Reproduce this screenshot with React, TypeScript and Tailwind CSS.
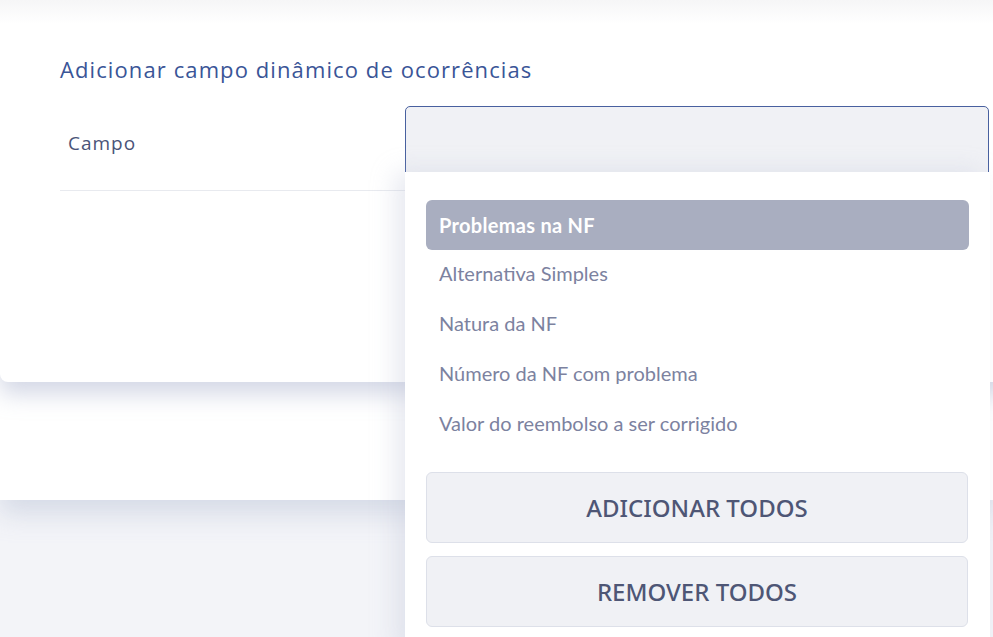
import React from "react";

const options = [
  "Problemas na NF",
  "Alternativa Simples",
  "Natura da NF",
  "Número da NF com problema",
  "Valor do reembolso a ser corrigido",
];

const App = () => {
  return (
    <div className="relative w-[993px] h-[637px] overflow-hidden bg-[#f3f4f8]">
      {/* page card behind the modal */}
      <div className="h-[500px] bg-white shadow-[0_14px_24px_rgba(180,188,210,0.45)]">
        {/* modal */}
        <div className="relative h-[382px] w-[1010px] bg-white rounded-bl-lg shadow-[0_12px_22px_rgba(170,178,205,0.5)]">
          <div className="h-[24px] bg-gradient-to-b from-[#f6f6f7] to-white" />
          <div className="pl-[60px] pt-[30px]">
            <h2 className="text-[22px] leading-[30px] text-[#3a5597] font-['Open_Sans',sans-serif] tracking-[1.1px]">
              Adicionar campo dinâmico de ocorrências
            </h2>
            <div className="flex mt-[22px] w-[930px] border-b border-[#e8eaef]">
              <div className="w-[345px] h-[84px] pl-[8px] pt-[24px] text-[19px] leading-[26px] tracking-[1px] text-[#4a5478] font-['Open_Sans',sans-serif]">
                Campo
              </div>
              <div className="h-[84px]">
                <div className="w-[584px] h-[80px] bg-[#f0f1f5] border border-[#48609f] rounded-[5px]" />
              </div>
            </div>
          </div>
        </div>
      </div>

      {/* dropdown panel */}
      <div className="absolute left-[405px] top-[172px] w-[585px] h-[480px] bg-white shadow-[-10px_0_22px_rgba(190,196,215,0.35)] px-[21px] pt-[28px] font-['Lato',sans-serif]">
        <ul>
          {options.map((o, i) => (
            <li
              key={o}
              className={
                i === 0
                  ? "h-[50px] flex items-center px-[13px] rounded-[6px] bg-[#a9aec0] text-white font-bold text-[20px] tracking-[0.3px]"
                  : "h-[50px] flex items-center px-[13px] pb-[4px] text-[#7c829f] text-[20px]"
              }
            >
              {o}
            </li>
          ))}
        </ul>
        <div className="mt-[22px] flex flex-col gap-[13px] pr-[1px]">
          <button className="h-[71px] w-full rounded-[6px] bg-[#f0f1f5] border border-[#dde0e9] text-[24px] font-medium text-[#4e5675] font-['Noto_Sans',sans-serif]">
            ADICIONAR TODOS
          </button>
          <button className="h-[71px] w-full rounded-[6px] bg-[#f0f1f5] border border-[#dde0e9] text-[24px] font-medium text-[#4e5675] font-['Noto_Sans',sans-serif]">
            REMOVER TODOS
          </button>
        </div>
      </div>
    </div>
  );
};

export default App;
